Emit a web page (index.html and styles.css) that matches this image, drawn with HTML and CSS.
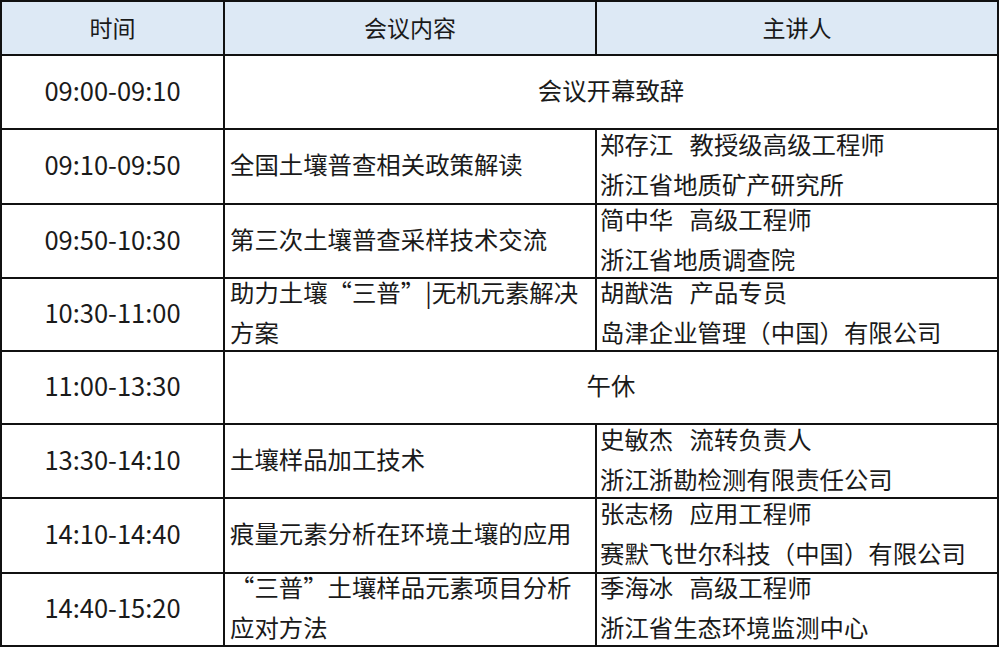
FILE: index.html
```html
<!DOCTYPE html>
<html lang="zh">
<head>
<meta charset="utf-8">
<link rel="stylesheet" href="styles.css">
</head>
<body>
<div class="agenda">
  <div class="cell head center">时间</div>
  <div class="cell head center">会议内容</div>
  <div class="cell head center">主讲人</div>

  <div class="cell center time">09:00-09:10</div>
  <div class="cell center span2">会议开幕致辞</div>

  <div class="cell center time">09:10-09:50</div>
  <div class="cell topic">全国土壤普查相关政策解读</div>
  <div class="cell speaker"><div>郑存江&nbsp;&nbsp;&nbsp;教授级高级工程师</div><div>浙江省地质矿产研究所</div></div>

  <div class="cell center time">09:50-10:30</div>
  <div class="cell topic">第三次土壤普查采样技术交流</div>
  <div class="cell speaker"><div>简中华&nbsp;&nbsp;&nbsp;高级工程师</div><div>浙江省地质调查院</div></div>

  <div class="cell center time">10:30-11:00</div>
  <div class="cell topic">助力土壤“三普”|无机元素解决方案</div>
  <div class="cell speaker"><div>胡猷浩&nbsp;&nbsp;&nbsp;产品专员</div><div>岛津企业管理（中国）有限公司</div></div>

  <div class="cell center time">11:00-13:30</div>
  <div class="cell center span2">午休</div>

  <div class="cell center time">13:30-14:10</div>
  <div class="cell topic">土壤样品加工技术</div>
  <div class="cell speaker"><div>史敏杰&nbsp;&nbsp;&nbsp;流转负责人</div><div>浙江浙勘检测有限责任公司</div></div>

  <div class="cell center time">14:10-14:40</div>
  <div class="cell topic">痕量元素分析在环境土壤的应用</div>
  <div class="cell speaker"><div>张志杨&nbsp;&nbsp;&nbsp;应用工程师</div><div>赛默飞世尔科技（中国）有限公司</div></div>

  <div class="cell center time">14:40-15:20</div>
  <div class="cell topic">“三普”土壤样品元素项目分析应对方法</div>
  <div class="cell speaker"><div>季海冰&nbsp;&nbsp;&nbsp;高级工程师</div><div>浙江省生态环境监测中心</div></div>
</div>
</body>
</html>
```

FILE: styles.css
```css
html, body {
  margin: 0;
  padding: 0;
  background: #ffffff;
}

body {
  font-family: "Noto Sans CJK SC", "Noto Sans", sans-serif;
  font-size: 24.4px;
  color: #1a1a1a;
}

.agenda {
  display: grid;
  width: 995px;
  grid-template-columns: 221px 370px 400px;
  grid-template-rows: 52px 72px 73px 72px 71px 71px 72px 73px 71px;
  gap: 2px;
  background: #111111;
  border: 2px solid #111111;
}

.cell {
  background: #ffffff;
  display: flex;
  align-items: center;
  line-height: 40px;
  padding-bottom: 5px;
  min-width: 0;
}

.head {
  background: #dde9f5;
  font-size: 23px;
  padding-bottom: 3px;
}

.time {
  font-size: 25.5px;
}

.center {
  justify-content: center;
  text-align: center;
}

.span2 {
  grid-column: 2 / 4;
}

.topic {
  padding-left: 5px;
  padding-right: 4px;
}

.speaker {
  flex-direction: column;
  align-items: flex-start;
  justify-content: center;
  padding-left: 3px;
  white-space: nowrap;
}
```
